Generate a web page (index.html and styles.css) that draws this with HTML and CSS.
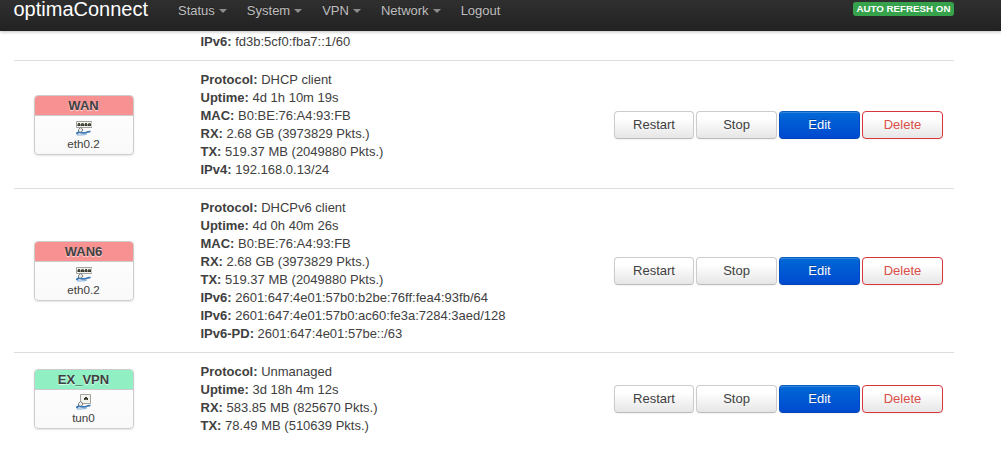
FILE: index.html
```html
<!DOCTYPE html>
<html lang="en">
<head>
<meta charset="utf-8">
<title>optimaConnect - Interfaces</title>
<link rel="stylesheet" href="styles.css">
</head>
<body>
<svg class="sprites" width="0" height="0" aria-hidden="true">
  <symbol id="plug" viewBox="0 0 16 16">
    <path d="M2.500 9.500l2-2 1.500 1 1 1.500-2.500 3-2-1z" fill="#e9e9e6" stroke="#77797b" stroke-width="1"/>
    <path d="M.5 14.300c0-1.800 2.500-2.300 4-1.800 2 .6 3.500.8 5.500 0 1.500-.6 2.500-1.300 4.500-.8" fill="none" stroke="#3d78b6" stroke-width="1.800"/>
    <path d="M1 14.900c3-.1 7 .7 10-1.200" fill="none" stroke="#7fabd8" stroke-width="1.100"/>
  </symbol>
  <symbol id="switch" viewBox="0 0 16 16">
    <path d="M.5 1.500h15.500v6H.5z" fill="#f2f2ee" stroke="#a2a19d"/>
    <path d="M1.500 4h3v2h-3zM5 4h3v2H5zM8.500 4h3v2h-3zM12 4h3v2h-3zM2 3h2v1H2zM5.500 3h2v1h-2zM9 3h2v1H9zM12.500 3h2v1h-2z" fill="#3a3b35"/>
    <path d="M2.500 3.500h1v1h-1zM6 3.500h1v1H6zM9.500 3.500h1v1h-1zM13 3.500h1v1h-1z" fill="#85804c"/>
    <use href="#plug"/>
  </symbol>
  <symbol id="port" viewBox="0 0 16 16">
    <path d="M4.500.5h10v9h-10z" fill="#f3f3f0" stroke="#a2a39f"/>
    <path d="M8 4h1V3h2v1h1v2H8z" fill="#343530"/>
    <path d="M9 5h2v1H9z" fill="#77744c"/>
    <use href="#plug"/>
  </symbol>
</svg>
<header class="navbar">
  <div class="navbar-inner">
    <a class="brand">optimaConnect</a>
    <nav class="nav">
      <a class="nav-item dropdown">Status</a>
      <a class="nav-item dropdown">System</a>
      <a class="nav-item dropdown">VPN</a>
      <a class="nav-item dropdown">Network</a>
      <a class="nav-item">Logout</a>
    </nav>
    <span class="refresh">AUTO REFRESH ON</span>
  </div>
</header>
<main class="interfaces">
  <section class="row row-first">
    <div class="details"><div><b>IPv6:</b> fd3b:5cf0:fba7::1/60</div></div>
  </section>
  <section class="row">
    <div class="ifacebox">
      <div class="ifacebox-head wan">WAN</div>
      <div class="ifacebox-body"><svg class="icon"><use href="#switch"/></svg><span>eth0.2</span></div>
    </div>
    <div class="details">
      <div><b>Protocol:</b> DHCP client</div>
      <div><b>Uptime:</b> 4d 1h 10m 19s</div>
      <div><b>MAC:</b> B0:BE:76:A4:93:FB</div>
      <div><b>RX:</b> 2.68 GB (3973829 Pkts.)</div>
      <div><b>TX:</b> 519.37 MB (2049880 Pkts.)</div>
      <div><b>IPv4:</b> 192.168.0.13/24</div>
    </div>
    <div class="actions">
      <button class="btn">Restart</button><button class="btn">Stop</button><button class="btn edit">Edit</button><button class="btn delete">Delete</button>
    </div>
  </section>
  <section class="row">
    <div class="ifacebox">
      <div class="ifacebox-head wan">WAN6</div>
      <div class="ifacebox-body"><svg class="icon"><use href="#switch"/></svg><span>eth0.2</span></div>
    </div>
    <div class="details">
      <div><b>Protocol:</b> DHCPv6 client</div>
      <div><b>Uptime:</b> 4d 0h 40m 26s</div>
      <div><b>MAC:</b> B0:BE:76:A4:93:FB</div>
      <div><b>RX:</b> 2.68 GB (3973829 Pkts.)</div>
      <div><b>TX:</b> 519.37 MB (2049880 Pkts.)</div>
      <div><b>IPv6:</b> 2601:647:4e01:57b0:b2be:76ff:fea4:93fb/64</div>
      <div><b>IPv6:</b> 2601:647:4e01:57b0:ac60:fe3a:7284:3aed/128</div>
      <div><b>IPv6-PD:</b> 2601:647:4e01:57be::/63</div>
    </div>
    <div class="actions">
      <button class="btn">Restart</button><button class="btn">Stop</button><button class="btn edit">Edit</button><button class="btn delete">Delete</button>
    </div>
  </section>
  <section class="row">
    <div class="ifacebox">
      <div class="ifacebox-head vpn">EX_VPN</div>
      <div class="ifacebox-body"><svg class="icon"><use href="#port"/></svg><span>tun0</span></div>
    </div>
    <div class="details">
      <div><b>Protocol:</b> Unmanaged</div>
      <div><b>Uptime:</b> 3d 18h 4m 12s</div>
      <div><b>RX:</b> 583.85 MB (825670 Pkts.)</div>
      <div><b>TX:</b> 78.49 MB (510639 Pkts.)</div>
    </div>
    <div class="actions">
      <button class="btn">Restart</button><button class="btn">Stop</button><button class="btn edit">Edit</button><button class="btn delete">Delete</button>
    </div>
  </section>
</main>
</body>
</html>
```
FILE: styles.css
```css
* {
  box-sizing: border-box;
}

body {
  margin: 0;
  height: 458px;
  overflow: hidden;
  background: #fff;
  color: #404040;
  font: 13px/18px "Liberation Sans", Arial, sans-serif;
}

.sprites {
  display: block;
}

.navbar {
  height: 31px;
  background: linear-gradient(#2f2f2f, #222);
  box-shadow: 0 1px 3px rgba(0, 0, 0, .25);
}

.navbar-inner {
  display: flex;
  align-items: flex-start;
  width: 940px;
  margin-left: 14px;
}

.brand {
  width: 163px;
  margin-top: -1px;
  margin-left: -.5px;
  color: #fff;
  font-size: 20px;
  line-height: 20px;
}

.nav {
  display: flex;
  gap: 20px;
  flex: 1;
  padding: 2px 0 0 1.500px;
}

.nav-item {
  color: #bfbfbf;
  text-shadow: 0 -1px 0 rgba(0, 0, 0, .25);
}

.dropdown::after {
  content: "";
  display: inline-block;
  margin-left: 4px;
  vertical-align: 2px;
  border: 4px solid transparent;
  border-top-color: #8c8c8c;
  border-bottom: 0;
}

.refresh {
  height: 14px;
  margin-top: 2px;
  padding: 0 3.500px;
  border-radius: 3px;
  background: #37a24c;
  color: #fff;
  font-size: 9.75px;
  font-weight: bold;
  line-height: 14px;
  white-space: nowrap;
}

.interfaces {
  width: 940px;
  margin-left: 14px;
}

.row {
  display: grid;
  grid-template-columns: 100px 1fr 329px;
  align-items: center;
  padding: 10px 11px 9px 20px;
  border-top: 1px solid #ddd;
}

.row-first {
  padding-top: 2px;
  border: 0;
}

.row-first .details {
  grid-column: 2;
}

.details {
  padding-left: 66.500px;
}

.ifacebox {
  height: 60px;
  border: 1px solid #ccc;
  border-radius: 4px;
  overflow: hidden;
  background: linear-gradient(#fff, #f9f9f9);
  box-shadow: 0 1px 2px rgba(0, 0, 0, .1);
  text-align: center;
}

.ifacebox-head {
  height: 20px;
  padding-right: 1px;
  border-bottom: 1px solid #ccc;
  font-weight: bold;
  line-height: 20px;
  text-shadow: 0 1px 1px rgba(255, 255, 255, .75);
}

.wan {
  background: #f89292;
}

.vpn {
  background: #90f0c4;
}

.ifacebox-body {
  display: flex;
  flex-direction: column;
  align-items: center;
  padding: 4px 1px 0 0;
  font-size: 11.7px;
  line-height: 16px;
}

.icon {
  width: 16px;
  height: 16px;
  margin-left: 1px;
}

.actions {
  display: grid;
  grid-template-columns: 80px repeat(3, 81px);
  gap: 2px;
}

.btn {
  height: 28px;
  padding: 0;
  border: 1px solid #ccc;
  border-bottom-color: #bbb;
  border-radius: 4px;
  background: linear-gradient(#fff, #fff 25%, #e6e6e6);
  box-shadow: inset 0 1px 0 rgba(255, 255, 255, .2), 0 1px 2px rgba(0, 0, 0, .05);
  color: #404040;
  font: 13px/18px "Liberation Sans", Arial, sans-serif;
}

.edit {
  border-color: #0a5dc0 #004bc0 #0043b8;
  background: linear-gradient(#0069d6, #0049d0);
  color: #fff;
  text-shadow: 0 -1px 0 rgba(0, 0, 0, .25);
}

.delete {
  border-color: #d9353a;
  color: #da4f49;
}
```
